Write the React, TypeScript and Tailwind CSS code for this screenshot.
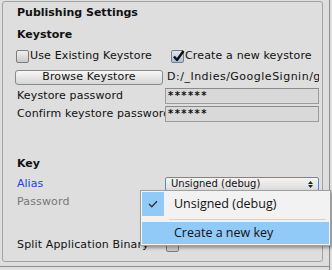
import React from "react";

function Toggle({ checked }: { checked?: boolean }) {
  return (
    <span
      className={
        "relative inline-block h-[13px] w-[13px] shrink-0 rounded-[2px] border border-[#7d7d7d] " +
        (checked
          ? "bg-gradient-to-b from-[#dbe6f5] to-[#a9c0e0]"
          : "bg-gradient-to-b from-[#f0f0f0] to-[#c9c9c9]")
      }
    >
      {checked && (
        <svg
          className="absolute left-[0px] top-[-2px]"
          width="13"
          height="14"
          viewBox="0 0 13 14"
        >
          <path
            d="M2 7.5 L5 11 L11.5 2"
            fill="none"
            stroke="#111"
            strokeWidth="2.4"
            strokeLinejoin="round"
          />
        </svg>
      )}
    </span>
  );
}

function Field({ label, value }: { label: string; value: string }) {
  return (
    <div className="flex h-[16px] items-center">
      <span className="w-[148px] shrink-0 overflow-hidden whitespace-nowrap leading-[16px] tracking-[0.15px]">
        {label}
      </span>
      <div className="flex h-[16px] w-[154px] items-center border border-[#9c9c9c] border-t-[#8a8a8a] bg-[#d9d9d9] pl-[2px] text-[10px] font-bold leading-[14px] tracking-[1.4px]">
        {value}
      </div>
    </div>
  );
}

export default function App() {
  return (
    <div className="relative flex h-[270px] w-[332px] overflow-hidden bg-[#dedede] font-['DejaVu_Sans',sans-serif] text-[11px] text-[#111]">
      {/* Inspector column */}
      <div className="flex w-[329px] flex-col">
        <div className="ml-[2px] mt-[1px] h-[261px] w-[321px] rounded-[3px] border border-[#a2a2a2] pl-[14px] pt-[3px]">
          <div className="h-[16px] font-bold leading-[16px]">Publishing Settings</div>
          <div className="mt-[6px] h-[16px] font-bold leading-[16px]">Keystore</div>

          <div className="mt-[5px] flex h-[16px] items-center">
            <div className="-ml-[1px] flex w-[155px] items-center gap-[1px]">
              <Toggle />
              <span className="leading-[16px] tracking-[0.15px]">Use Existing Keystore</span>
            </div>
            <div className="flex items-center gap-[1px]">
              <Toggle checked />
              <span className="leading-[16px] tracking-[0.15px]">Create a new keystore</span>
            </div>
          </div>

          <div className="mt-[5px] flex h-[16px] items-center">
            <button className="-ml-[2px] flex h-[15px] w-[148px] items-center justify-center rounded-[3px] border border-[#8a8a8a] bg-gradient-to-b from-[#f7f7f7] to-[#d6d6d6] leading-[14px] tracking-[0.15px]">
              Browse Keystore
            </button>
            <span className="ml-[4px] w-[152px] overflow-hidden whitespace-nowrap leading-[16px] tracking-[0.5px]">
              D:/_Indies/GoogleSignin/google
            </span>
          </div>

          <div className="mt-[3px] flex flex-col gap-[2px]">
            <Field label="Keystore password" value="******" />
            <Field label="Confirm keystore password" value="******" />
          </div>

          <div className="mt-[34px] h-[16px] font-bold leading-[16px]">Key</div>

          <div className="mt-[4px] flex h-[16px] items-center">
            <span className="w-[148px] leading-[16px] text-[#2446d6]">Alias</span>
            <div className="relative flex h-[14px] w-[154px] items-center rounded-[2px] border border-[#5a86e0] bg-gradient-to-b from-[#f4f4f4] to-[#dcdcdc] pl-[5px] text-[10px] leading-[12px]">
              Unsigned (debug)
              <svg className="absolute right-[5px] top-[3px]" width="5" height="7" viewBox="0 0 5 7">
                <path d="M0 3 L2.5 0 L5 3 Z M0 4 L2.5 7 L5 4 Z" fill="#222" />
              </svg>
            </div>
          </div>

          <div className="mt-[2px] h-[16px] leading-[16px] tracking-[0.15px] text-[#777]">Password</div>

          <div className="mt-[27px] flex h-[16px] items-center">
            <span className="w-[149px] shrink-0 overflow-hidden whitespace-nowrap leading-[16px] tracking-[0.15px]">
              Split Application Binary
            </span>
            <Toggle />
          </div>
        </div>
        <div className="mt-[4px] h-[1px] w-[330px] bg-[#8c8c8c]" />
      </div>
      <div className="h-full w-[1px] bg-[#8c8c8c]" />

      {/* Popup menu */}
      <div className="absolute left-[140px] top-[190px] w-[191px] border border-[#a0a0a0] bg-[#f2f2f2] p-[1px] font-['Open_Sans',sans-serif] text-[12.5px] text-[#111] shadow-[2px_2px_3px_rgba(0,0,0,0.35)]">
        <div className="flex h-[24px] items-center">
          <div className="flex h-[24px] w-[22px] items-center justify-center bg-[#91c9f7]">
            <svg width="10" height="8" viewBox="0 0 10 8">
              <path d="M1 4 L3.8 6.8 L9 1.2" fill="none" stroke="#333" strokeWidth="1.4" />
            </svg>
          </div>
          <span className="ml-[10px] leading-[24px]">Unsigned (debug)</span>
        </div>
        <div className="flex h-[6px] items-center pl-[27px] pr-[3px]">
          <div className="h-[1px] w-full bg-[#d4d4d4]" />
        </div>
        <div className="h-[22px] bg-[#91c9f7] pl-[32px] leading-[21px]">Create a new key</div>
      </div>
    </div>
  );
}
